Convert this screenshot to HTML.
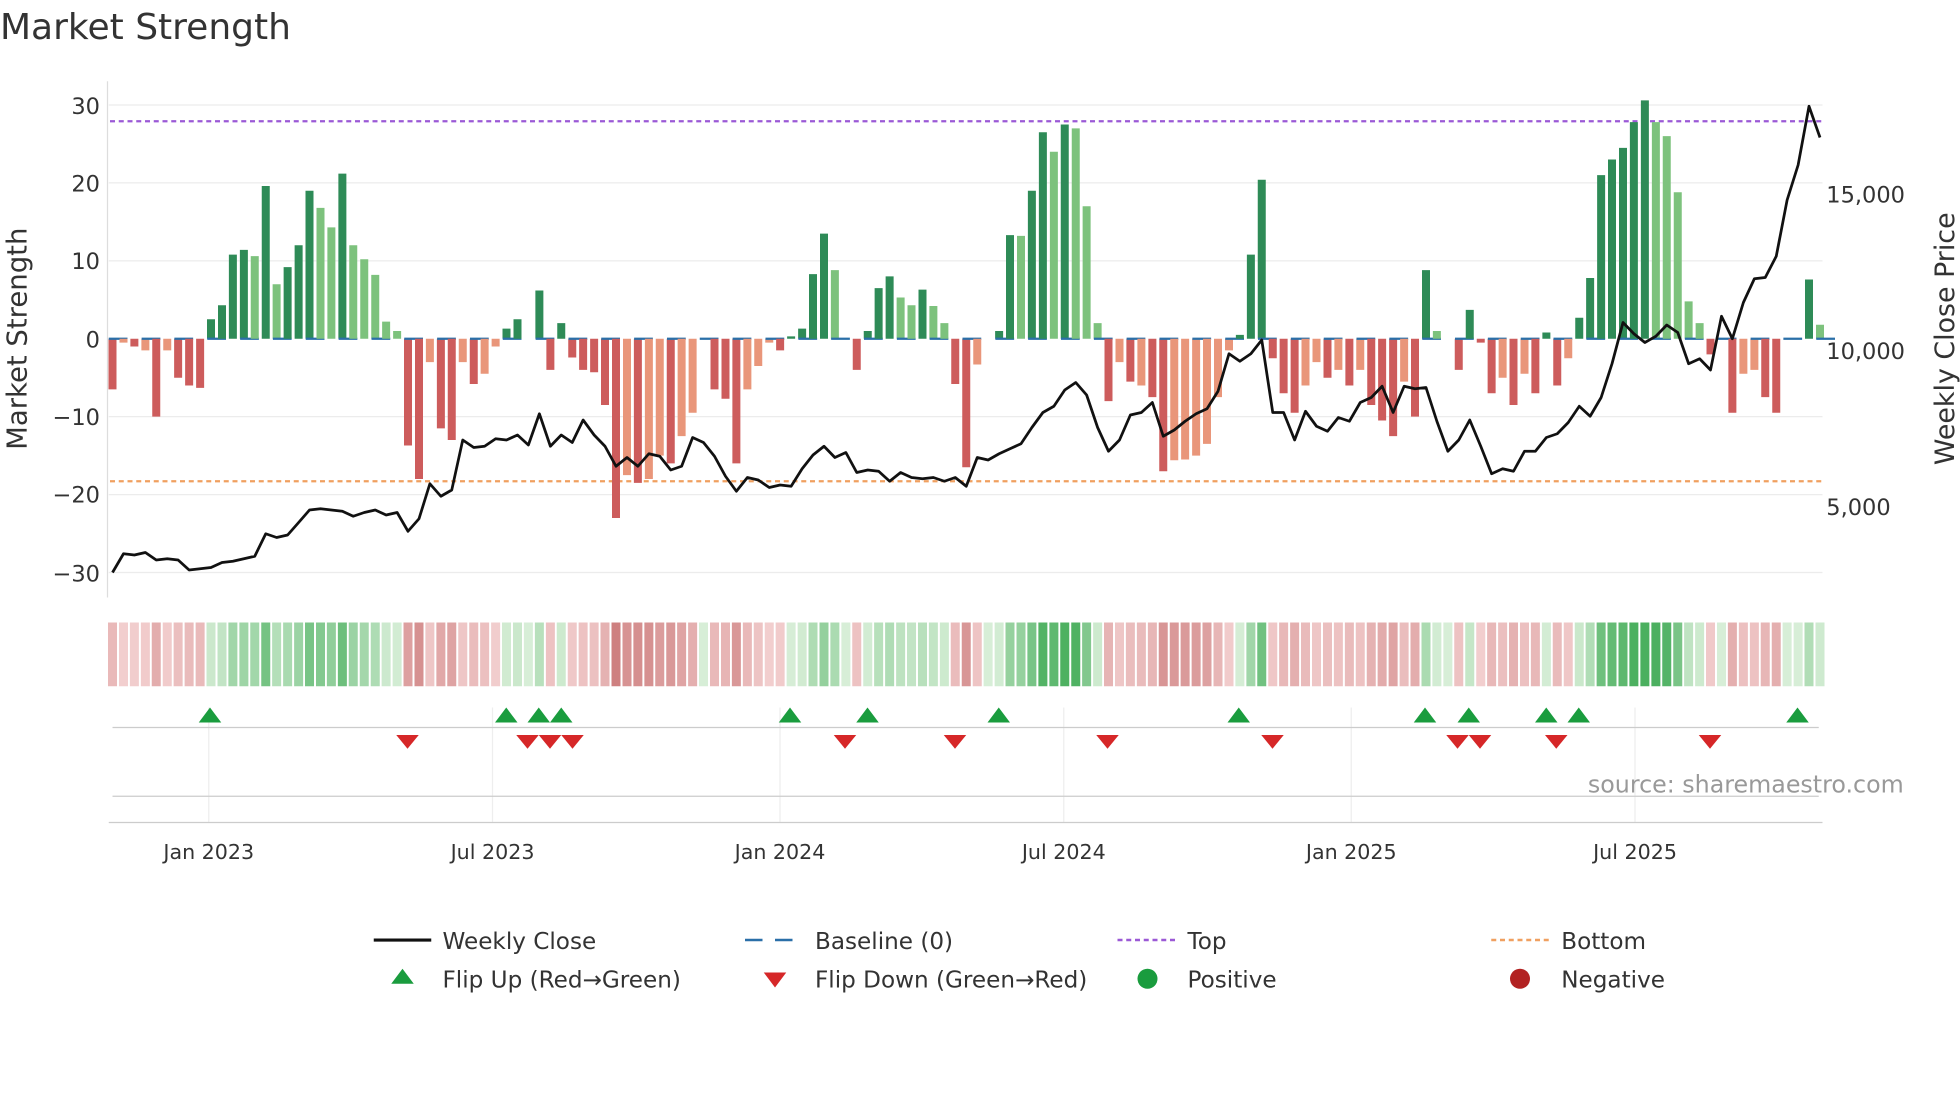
<!DOCTYPE html>
<html><head><meta charset="utf-8"><style>
html,body{margin:0;padding:0;background:#fff;}
svg{display:block;font-family:"DejaVu Sans","Liberation Sans",sans-serif;}
</style></head><body>
<svg id="s" width="1960" height="1102" viewBox="0 0 1568 881.6" xmlns="http://www.w3.org/2000/svg">
<rect width="1568" height="882" fill="#fff"/>
<text x="0" y="31" font-size="28.8" fill="#333">Market Strength</text>
<g stroke="#ececec" stroke-width="1">
<line x1="87" y1="84" x2="1458" y2="84"/><line x1="87" y1="146.3" x2="1458" y2="146.3"/>
<line x1="87" y1="208.7" x2="1458" y2="208.7"/><line x1="87" y1="333.3" x2="1458" y2="333.3"/>
<line x1="87" y1="395.7" x2="1458" y2="395.7"/><line x1="87" y1="458" x2="1458" y2="458"/>
</g>
<line x1="86" y1="65" x2="86" y2="478" stroke="#ddd"/>
<g font-size="18" fill="#333" text-anchor="end">
<text x="80" y="91">30</text><text x="80" y="153">20</text><text x="80" y="215">10</text>
<text x="80" y="278">0</text><text x="80" y="340">−10</text><text x="80" y="402">−20</text><text x="80" y="465">−30</text>
</g>
<g font-size="18" fill="#333">
<text x="1461" y="162">15,000</text><text x="1461" y="287">10,000</text><text x="1461" y="412">5,000</text>
</g>
<text transform="translate(21,271) rotate(-90)" font-size="22" fill="#333" text-anchor="middle">Market Strength</text>
<text transform="translate(1563,271) rotate(-90)" font-size="21.5" fill="#333" text-anchor="middle">Weekly Close Price</text>
<line x1="88" y1="97" x2="1458" y2="97" stroke="#9b59d6" stroke-width="1.8" stroke-dasharray="4,3"/>
<line x1="88" y1="385" x2="1458" y2="385" stroke="#f0a060" stroke-width="1.8" stroke-dasharray="4,3"/>
<g id="bars"></g>
<g id="heat"></g>
<polyline id="price" fill="none" stroke="#111" stroke-width="2.2" stroke-linejoin="round"/>
<g stroke="#eee"><line x1="167" y1="566" x2="167" y2="658"/><line x1="394" y1="566" x2="394" y2="658"/><line x1="624" y1="566" x2="624" y2="658"/><line x1="851" y1="566" x2="851" y2="658"/><line x1="1081" y1="566" x2="1081" y2="658"/><line x1="1308" y1="566" x2="1308" y2="658"/></g>
<line x1="90" y1="582" x2="1455" y2="582" stroke="#ccc"/>
<line x1="90" y1="637" x2="1455" y2="637" stroke="#ccc"/>
<line x1="87" y1="658" x2="1458" y2="658" stroke="#ccc"/>
<g id="mk"></g>
<text x="1523" y="634" font-size="19" fill="#999" text-anchor="end">source: sharemaestro.com</text>
<g font-size="16.5" fill="#333" text-anchor="middle">
<text x="167" y="687">Jan 2023</text><text x="394" y="687">Jul 2023</text><text x="624" y="687">Jan 2024</text>
<text x="851" y="687">Jul 2024</text><text x="1081" y="687">Jan 2025</text><text x="1308" y="687">Jul 2025</text>
</g>
<g font-size="18.5" fill="#333">
<line x1="299" y1="752" x2="345" y2="752" stroke="#111" stroke-width="2.5"/><text x="354" y="759">Weekly Close</text>
<line x1="596" y1="752" x2="642" y2="752" stroke="#2a6fa8" stroke-width="2" stroke-dasharray="14,10"/><text x="652" y="759">Baseline (0)</text>
<line x1="894" y1="752" x2="940" y2="752" stroke="#9b59d6" stroke-width="2" stroke-dasharray="4,3"/><text x="950" y="759">Top</text>
<line x1="1193" y1="752" x2="1239" y2="752" stroke="#f0a060" stroke-width="2" stroke-dasharray="4,3"/><text x="1249" y="759">Bottom</text>
<polygon points="322,775 313,787 331,787" fill="#1a9c3e"/><text x="354" y="790">Flip Up (Red→Green)</text>
<polygon points="611,778 629,778 620,790" fill="#d62728"/><text x="652" y="790">Flip Down (Green→Red)</text>
<circle cx="918" cy="783" r="8" fill="#1a9c3e"/><text x="950" y="790">Positive</text>
<circle cx="1216" cy="783" r="8" fill="#b22222"/><text x="1249" y="790">Negative</text>
</g>
</svg>
<script>
var V=[[-6.5,1],[-0.5,0],[-1,1],[-1.5,0],[-10,1],[-1.5,0],[-5,1],[-6,1],[-6.3,1],[2.5,1],[4.3,1],[10.8,1],[11.4,1],[10.6,0],[19.6,1],[7,0],[9.2,1],[12,1],[19,1],[16.8,0],[14.3,0],[21.2,1],[12,0],[10.2,0],[8.2,0],[2.2,0],[1,0],[-13.7,1],[-18,1],[-3,0],[-11.5,1],[-13,1],[-3,0],[-5.8,1],[-4.5,0],[-1,0],[1.3,1],[2.5,1],[0,1],[6.2,1],[-4,1],[2,1],[-2.4,1],[-4,1],[-4.3,1],[-8.5,1],[-23,1],[-17.5,0],[-18.5,1],[-18,0],[-15,0],[-16,1],[-12.5,0],[-9.5,0],[0,0],[-6.5,1],[-7.7,1],[-16,1],[-6.5,0],[-3.5,0],[-0.5,0],[-1.5,1],[0.3,1],[1.3,1],[8.3,1],[13.5,1],[8.8,0],[0,0],[-4,1],[1,1],[6.5,1],[8,1],[5.3,0],[4.3,0],[6.3,1],[4.2,0],[2,0],[-5.8,1],[-16.5,1],[-3.3,0],[0,0],[1,1],[13.3,1],[13.2,0],[19,1],[26.5,1],[24,0],[27.5,1],[27,0],[17,0],[2,0],[-8,1],[-3,0],[-5.5,1],[-6,0],[-7.5,1],[-17,1],[-15.6,0],[-15.5,0],[-15,0],[-13.5,0],[-7.5,0],[-1.5,0],[0.5,1],[10.8,1],[20.4,1],[-2.5,1],[-7,1],[-9.5,1],[-6,0],[-3,0],[-5,1],[-4,0],[-6,1],[-4,0],[-8.5,1],[-10.5,1],[-12.5,1],[-5.5,0],[-10,1],[8.8,1],[1,0],[0,0],[-4,1],[3.7,1],[-0.5,1],[-7,1],[-5,0],[-8.5,1],[-4.5,0],[-7,1],[0.8,1],[-6,1],[-2.5,0],[2.7,1],[7.8,1],[21,1],[23,1],[24.5,1],[27.8,1],[30.6,1],[27.8,0],[26,0],[18.8,0],[4.8,0],[2,0],[-2,1],[0,0],[-9.5,1],[-4.5,0],[-4,0],[-7.5,1],[-9.5,1],[0,0],[0,0],[7.6,1],[1.8,0]];
var n=V.length,x0=90,st=(1456-90)/(n-1),b='',h='';
for(var i=0;i<n;i++){var v=V[i][0],d=V[i][1],x=x0+i*st,y0=271,hh=Math.abs(v)*6.233;
var c=v>=0?(d?'#2e8b57':'#7dc27d'):(d?'#cd5c5c':'#e9967a');
if(hh>0.3)b+='<rect x="'+(x-3.2).toFixed(1)+'" y="'+(v>=0?y0-hh:y0).toFixed(1)+'" width="6.4" height="'+hh.toFixed(1)+'" fill="'+c+'"/>';
if(i%3==0)b+='<line x1="'+(x-3).toFixed(1)+'" y1="271" x2="'+(x+12).toFixed(1)+'" y2="271" stroke="#2a6fa8" stroke-width="1.8"/>';
var t=Math.min(Math.abs(v)/28,1);
var col=v>=0?'rgb('+Math.round(215-140*t)+','+Math.round(238-62*t)+','+Math.round(215-120*t)+')':'rgb('+Math.round(243-45*t)+','+Math.round(208-98*t)+','+Math.round(208-98*t)+')';
h+='<rect x="'+(x-3.6).toFixed(1)+'" y="498" width="7.2" height="51" fill="'+col+'"/>';}
document.getElementById('bars').innerHTML=b;document.getElementById('heat').innerHTML=h;
var P=[458,443,444,442,448,447,448,456,455,454,450,449,447,445,427,430,428,418,408,407,408,409,413,410,408,412,410,425,415,387,397,392,352,358,357,351,352,348,356,331,357,348,354,336,348,357,373,366,373,363,365,376,373,350,354,365,381,393,382,384,390,388,389,375,364,357,366,362,378,376,377,385,378,382,383,382,385,382,389,366,368,363,359,355,342,330,325,312,306,316,342,361,352,332,330,322,349,344,337,331,327,313,283,289,283,272,330,330,352,329,341,345,334,337,322,318,309,330,309,311,310,337,361,352,336,357,379,375,377,361,361,350,347,338,325,333,318,291,258,267,274,269,260,266,291,287,296,253,271,242,223,222,205,160,132,85,110];
var m=P.length,ps=(1456-90)/(m-1),pts=[];for(var j=0;j<m;j++)pts.push((90+j*ps).toFixed(1)+','+P[j]);
document.getElementById('price').setAttribute('points',pts.join(' '));
var U=[168,405,431,449,632,694,799,991,1140,1175,1237,1263,1438],D=[326,422,440,458,676,764,886,1018,1166,1184,1245,1368],k='';
U.forEach(function(x){k+='<polygon points="'+x+',566 '+(x-9)+',578 '+(x+9)+',578" fill="#1a9c3e"/>';});
D.forEach(function(x){k+='<polygon points="'+(x-9)+',588 '+(x+9)+',588 '+x+',599" fill="#d62728"/>';});
document.getElementById('mk').innerHTML=k;
</script>
</body></html>
